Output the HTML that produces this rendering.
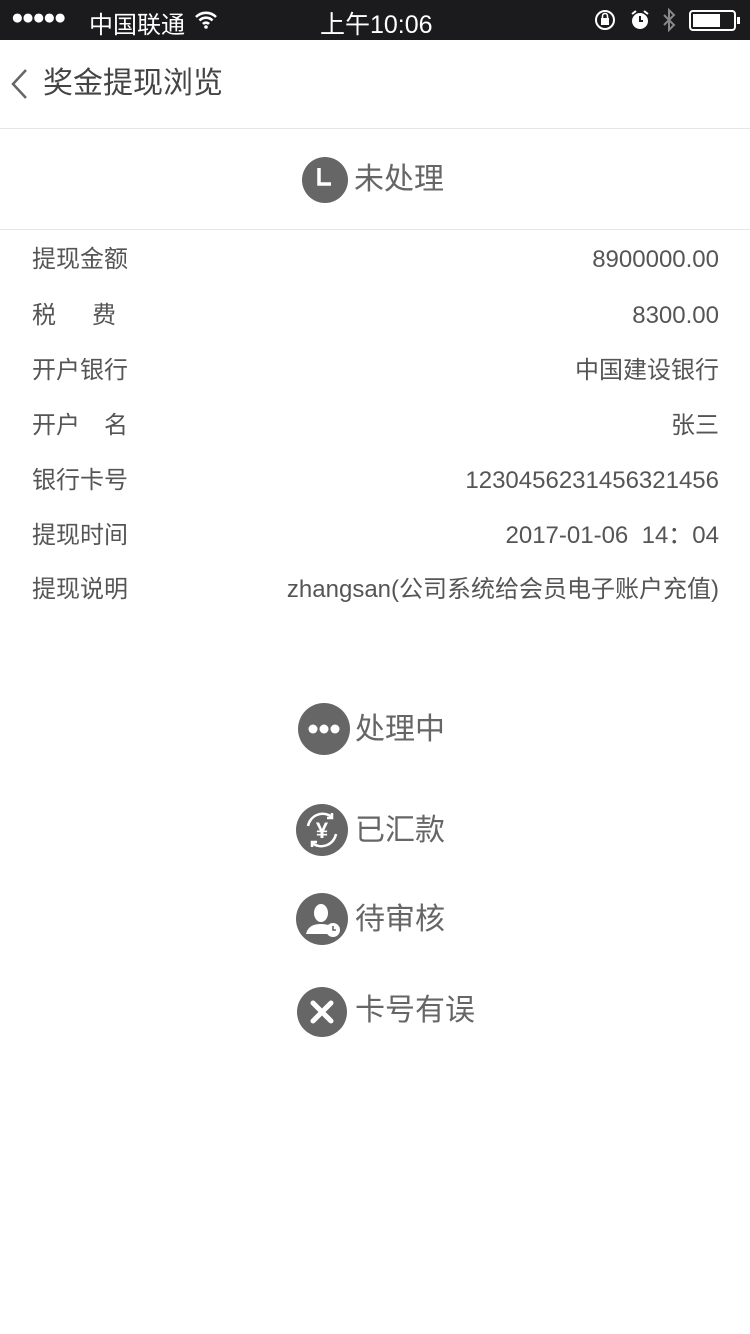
<!DOCTYPE html>
<html><head><meta charset="utf-8"><style>
*{margin:0;padding:0;box-sizing:border-box}
body{width:750px;height:1334px;background:#fff;font-family:"Liberation Sans","Noto Sans CJK SC",sans-serif;position:relative;overflow:hidden;color:#555}
.abs{position:absolute}
.sb{left:0;top:0;width:750px;height:40px;background:#1b1b1d;color:#fff;font-size:24px}
.row{position:absolute;left:32px;width:688px;height:30px;font-size:24px;color:#555;line-height:30px}
.row .r{position:absolute;right:1px;top:0}
.st{position:absolute;font-size:30px;color:#666;line-height:40px}
</style></head><body>
<div class="abs sb">
 <div class="abs" style="left:11px;top:6px;font-size:21px;letter-spacing:-2px">●●●●●</div>
 <div class="abs" style="left:89px;top:5px;font-size:24px">中国联通</div>
 <svg class="abs" style="left:194px;top:10px" width="24" height="20" viewBox="0 0 24 20"><path d="M2 7a14 14 0 0 1 20 0M5.5 10.5a9 9 0 0 1 13 0M9 14a4 4 0 0 1 6 0" stroke="#fff" stroke-width="2.6" fill="none"/><circle cx="12" cy="17" r="1.8" fill="#fff"/></svg>
 <div class="abs" style="left:320px;top:5px;font-size:25px">上午10:06</div>
 <svg class="abs" style="left:594px;top:9px" width="24" height="22"><circle cx="11" cy="11" r="9" stroke="#fff" stroke-width="2" fill="none"/><rect x="7" y="9" width="8" height="7" fill="#fff"/><path d="M8.5 9V7a2.5 2.5 0 0 1 5 0v2" stroke="#fff" stroke-width="1.6" fill="none"/></svg>
 <svg class="abs" style="left:629px;top:9px" width="22" height="22"><circle cx="11" cy="12" r="8" fill="#fff"/><path d="M11 7v5h3" stroke="#1b1b1d" stroke-width="2" fill="none"/><path d="M3 5l4-3M19 5l-4-3" stroke="#fff" stroke-width="2"/></svg>
 <svg class="abs" style="left:660px;top:7px" width="18" height="28"><path d="M4 8l10 10-5 5V3l5 5L4 18" stroke="#888" stroke-width="2" fill="none"/></svg>
 <div class="abs" style="left:689px;top:10px;width:47px;height:21px;border:2px solid #fff;border-radius:4px"><div style="margin:2px;width:27px;height:13px;background:#fff"></div></div>
 <div class="abs" style="left:737px;top:17px;width:3px;height:7px;background:#fff"></div>
</div>
<svg class="abs" style="left:10px;top:68px" width="20" height="32"><path d="M16 2L3 16l13 14" stroke="#666" stroke-width="2.5" fill="none"/></svg>
<div class="abs" style="left:43px;top:64px;font-size:30px;color:#444;line-height:40px">奖金提现浏览</div>
<div class="abs" style="left:0;top:128px;width:750px;height:1px;background:#e6e6e6"></div>
<svg class="abs" style="left:302px;top:157px" width="46" height="46"><circle cx="23" cy="23" r="23" fill="#666"/><path d="M17 11v16h12" stroke="#fff" stroke-width="3.5" fill="none"/></svg>
<div class="st" style="left:354px;top:160px">未处理</div>
<div class="abs" style="left:0;top:229px;width:750px;height:1px;background:#e6e6e6"></div>
<div class="row" style="top:245px">提现金额<span class="r">8900000.00</span></div>
<div class="row" style="top:301px">税&emsp;&ensp;费<span class="r">8300.00</span></div>
<div class="row" style="top:356px">开户银行<span class="r">中国建设银行</span></div>
<div class="row" style="top:411px">开户&emsp;名<span class="r">张三</span></div>
<div class="row" style="top:466px">银行卡号<span class="r">1230456231456321456</span></div>
<div class="row" style="top:521px">提现时间<span class="r">2017-01-06&nbsp; 14：04</span></div>
<div class="row" style="top:575px">提现说明<span class="r">zhangsan(公司系统给会员电子账户充值)</span></div>
<svg class="abs" style="left:298px;top:703px" width="52" height="52"><circle cx="26" cy="26" r="26" fill="#666"/><circle cx="15" cy="26" r="4.5" fill="#fff"/><circle cx="26" cy="26" r="4.5" fill="#fff"/><circle cx="37" cy="26" r="4.5" fill="#fff"/></svg>
<div class="st" style="left:355px;top:710px">处理中</div>
<svg class="abs" style="left:296px;top:804px" width="52" height="52"><circle cx="26" cy="26" r="26" fill="#666"/><path d="M12 22a15 15 0 0 1 24-9M40 30a15 15 0 0 1-24 9" stroke="#fff" stroke-width="2.5" fill="none"/><path d="M36 9v5h-5M16 43v-5h5" stroke="#fff" stroke-width="2.5" fill="none"/><text x="26" y="34" font-size="22" font-weight="bold" fill="#fff" text-anchor="middle" font-family="Liberation Sans">¥</text></svg>
<div class="st" style="left:355px;top:811px">已汇款</div>
<svg class="abs" style="left:296px;top:893px" width="52" height="52"><circle cx="26" cy="26" r="26" fill="#666"/><ellipse cx="25" cy="20" rx="7" ry="9" fill="#fff"/><path d="M10 41c2-8 8-10 15-10s11 2 13 6v4z" fill="#fff"/><circle cx="37" cy="37" r="7" fill="#fff"/><path d="M37 33v4h3" stroke="#666" stroke-width="1.6" fill="none"/></svg>
<div class="st" style="left:355px;top:900px">待审核</div>
<svg class="abs" style="left:296px;top:986px" width="52" height="52"><circle cx="26" cy="26" r="25" fill="#666"/><path d="M17 17l18 18M35 17L17 35" stroke="#fff" stroke-width="5" stroke-linecap="round"/></svg>
<div class="st" style="left:355px;top:991px">卡号有误</div>
</body></html>
